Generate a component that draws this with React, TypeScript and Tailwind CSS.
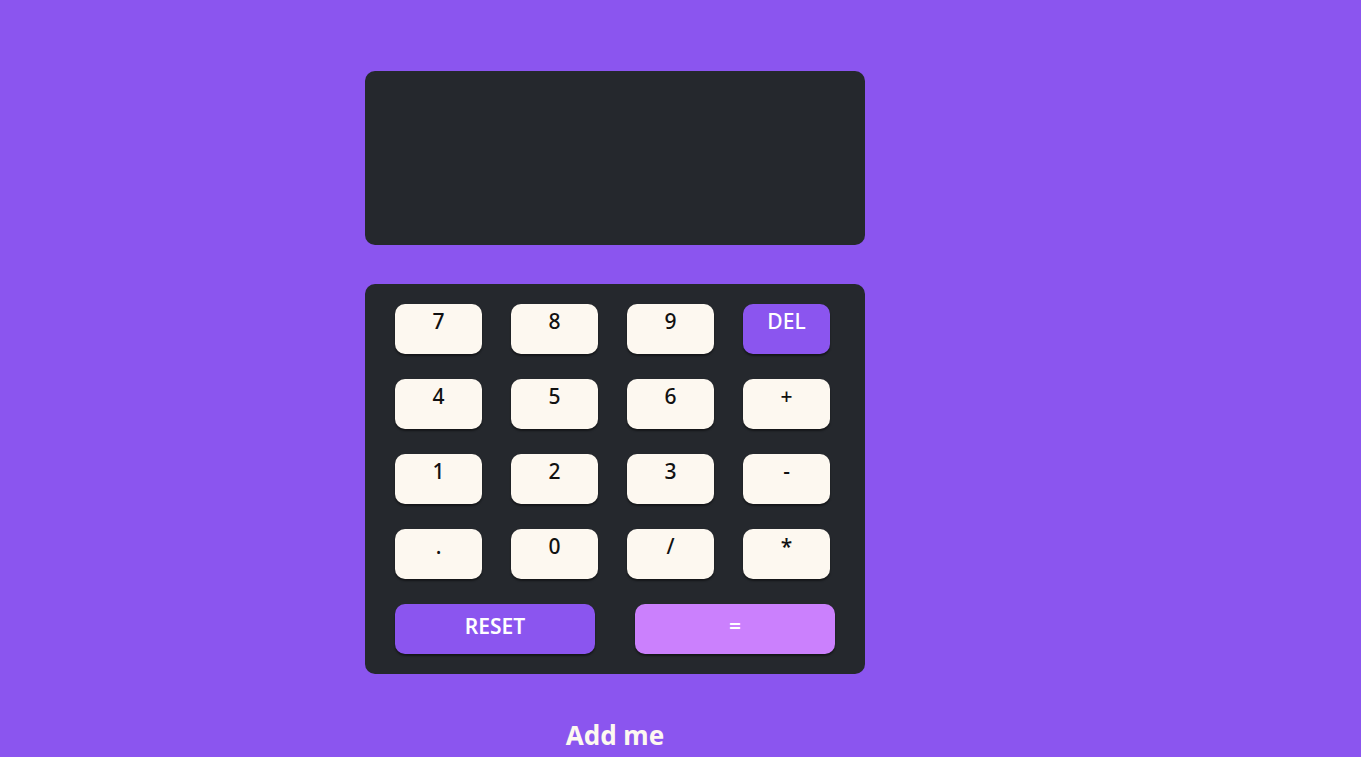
const keys = ['7', '8', '9', 'DEL', '4', '5', '6', '+', '1', '2', '3', '-', '.', '0', '/', '*'];

const Key = ({ label }: { label: string }) => {
  const isDel = label === 'DEL';
  return (
    <button
      className={
        isDel
          ? 'h-[50px] w-[87px] rounded-[10px] bg-[#8b55ef] pt-[3px] text-[21px] font-medium leading-[28px] text-white shadow-[0_2px_2px_rgba(0,0,0,0.45)] flex justify-center items-start'
          : 'h-[50px] w-[87px] rounded-[10px] bg-[#fdf8f0] pt-[3px] text-[21px] font-medium leading-[28px] text-[#111] shadow-[0_2px_2px_rgba(0,0,0,0.45)] flex justify-center items-start'
      }
    >
      {label}
    </button>
  );
};

export default function App() {
  return (
    <div
      className="min-h-[757px] w-full bg-[#8b55ef] pt-[71px] pl-[365px]"
      style={{ fontFamily: '"Noto Sans", "Open Sans", sans-serif' }}
    >
      <div className="w-[500px]">
        <div className="h-[174px] rounded-[10px] bg-[#25282d]" />

        <div className="mt-[39px] rounded-[10px] bg-[#25282d] pl-[30px] pr-[30px] pt-[20px] pb-[20px]">
          <div className="grid grid-cols-[repeat(4,87px)] gap-x-[29px] gap-y-[25px]">
            {keys.map((k) => (
              <Key key={k} label={k} />
            ))}
          </div>
          <div className="mt-[25px] flex justify-between">
            <button className="h-[50px] w-[200px] rounded-[10px] bg-[#8b55ef] pb-[4px] text-[21px] font-semibold text-white shadow-[0_2px_2px_rgba(0,0,0,0.45)] flex items-center justify-center">
              RESET
            </button>
            <button className="h-[50px] w-[200px] rounded-[10px] bg-[#cb80fd] pb-[4px] text-[21px] font-semibold text-white shadow-[0_2px_2px_rgba(0,0,0,0.45)] flex items-center justify-center">
              =
            </button>
          </div>
        </div>

        <p className="mt-[44px] text-center text-[26px] font-bold leading-[34px] text-[#fdf8f0]">Add me</p>
      </div>
    </div>
  );
}
